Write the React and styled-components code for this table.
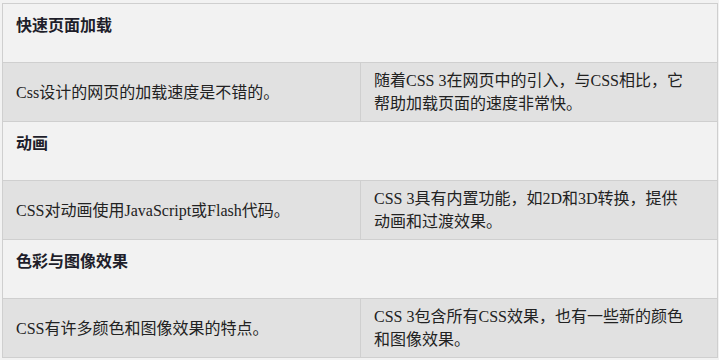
import React from "react";
import styled, {createGlobalStyle} from "styled-components";

const GlobalStyle = createGlobalStyle`
    html, body {
        margin: 0;
        padding: 0;
        background: #f2f2f2;
    }
    body {
        font-family: "Liberation Serif", "Noto Sans CJK SC", serif;
        color: #222;
    }
`;

const sections = [
    {
        title: "快速页面加载",
        css: "Css设计的网页的加载速度是不错的。",
        css3: "随着CSS 3在网页中的引入，与CSS相比，它帮助加载页面的速度非常快。",
    },
    {
        title: "动画",
        css: "CSS对动画使用JavaScript或Flash代码。",
        css3: "CSS 3具有内置功能，如2D和3D转换，提供动画和过渡效果。",
    },
    {
        title: "色彩与图像效果",
        css: "CSS有许多颜色和图像效果的特点。",
        css3: "CSS 3包含所有CSS效果，也有一些新的颜色和图像效果。",
    },
];

function App() {
    return (
        <>
            <GlobalStyle />
            <Page>
                <Table>
                    <colgroup>
                        <col style={{width: "358px"}} />
                        <col />
                    </colgroup>
                    <tbody>
                        {sections.map((s) => (
                            <React.Fragment key={s.title}>
                                <TitleRow>
                                    <TitleCell colSpan={2}>{s.title}</TitleCell>
                                </TitleRow>
                                <DataRow>
                                    <Cell>{s.css}</Cell>
                                    <Cell wide>{s.css3}</Cell>
                                </DataRow>
                            </React.Fragment>
                        ))}
                    </tbody>
                </Table>
            </Page>
        </>
    );
}

const Page = styled.div`
    padding: 3px 2px 0 2px;
`;

const Table = styled.table`
    width: 716px;
    border-collapse: collapse;
    table-layout: fixed;
    font-size: 16px;
    line-height: 23px;
`;

const TitleRow = styled.tr`
    height: 59px;
    background: #f2f2f2;
`;

const TitleCell = styled.td`
    border: 1px solid #cfcfcf;
    padding: 10px 13px 0 13px;
    vertical-align: top;
    font-weight: bold;
    font-family: "Liberation Serif", "Noto Sans CJK SC", serif;
    color: #1e1e2a;
`;

const DataRow = styled.tr`
    height: 59px;
    background: #e1e1e1;
`;

const Cell = styled.td`
    border: 1px solid #cfcfcf;
    padding: ${(props) => (props.wide ? "5px 24px 5px 13px" : "5px 13px")};
    vertical-align: middle;
`;

export default App;
